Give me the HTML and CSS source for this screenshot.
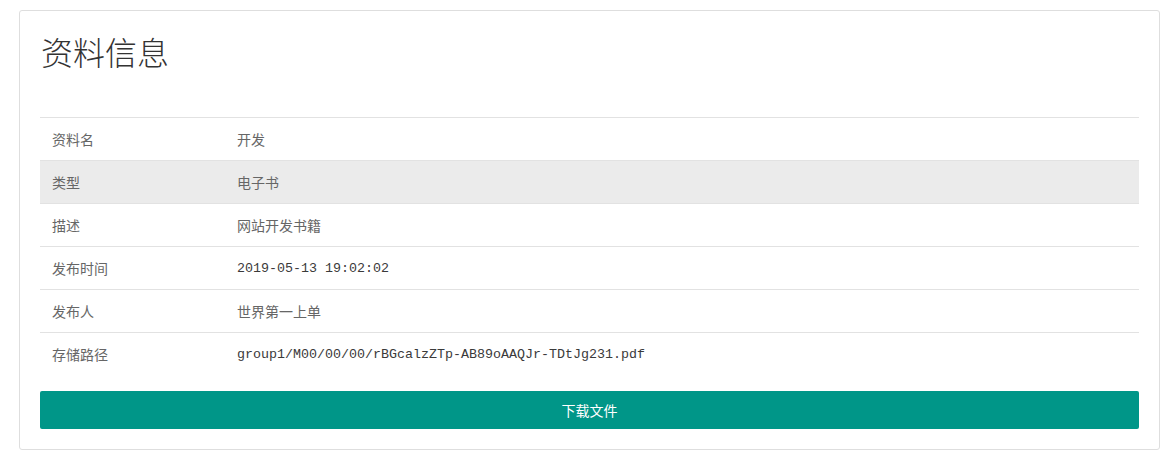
FILE: index.html
```html
<!DOCTYPE html>
<html lang="zh-CN">
<head>
<meta charset="utf-8">
<title>资料信息</title>
<link rel="stylesheet" href="styles.css">
</head>
<body>
<div class="card">
  <h2 class="title">资料信息</h2>
  <table class="info">
    <tr><td class="label">资料名</td><td>开发</td></tr>
    <tr class="hl"><td class="label">类型</td><td>电子书</td></tr>
    <tr><td class="label">描述</td><td>网站开发书籍</td></tr>
    <tr><td class="label">发布时间</td><td class="mono">2019-05-13 19:02:02</td></tr>
    <tr><td class="label">发布人</td><td>世界第一上单</td></tr>
    <tr class="last"><td class="label">存储路径</td><td class="mono">group1/M00/00/00/rBGcalzZTp-AB89oAAQJr-TDtJg231.pdf</td></tr>
  </table>
  <button class="btn">下载文件</button>
</div>
</body>
</html>
```

FILE: styles.css
```css
html, body {
  margin: 0;
  padding: 0;
  background: #fff;
}
body {
  padding: 10px 8px 12px 19px;
  font-family: "Noto Sans CJK SC", "Noto Sans", sans-serif;
  color: #666;
  font-size: 14px;
}
.card {
  border: 1px solid #dedede;
  border-radius: 3px;
  padding: 20px 20px 20px 20px;
  width: 1099px;
}
.title {
  margin: 0 0 46px 1px;
  font-size: 32px;
  line-height: 40px;
  font-weight: 300;
  color: #333;
}
.info {
  width: 100%;
  border-collapse: collapse;
}
.info td {
  border-top: 1px solid #e2e2e2;
  height: 42px;
  padding: 0 12px;
  line-height: 20px;
  vertical-align: middle;
  color: #666;
}
.info td.label {
  width: 161px;
}
.info tr.hl td {
  background: #ebebeb;
}
.info td.mono {
  font-family: "Liberation Mono", "Noto Sans CJK SC", monospace;
  font-size: 13.33px;
  color: #3a3a3a;
  height: 40px;
  padding-top: 2px;
}
.btn {
  display: block;
  width: 100%;
  height: 38px;
  margin-top: 16px;
  border: none;
  border-radius: 2px;
  background: #009688;
  color: #fff;
  font-family: "Noto Sans CJK SC", sans-serif;
  font-size: 14px;
  padding: 0;
}
```
